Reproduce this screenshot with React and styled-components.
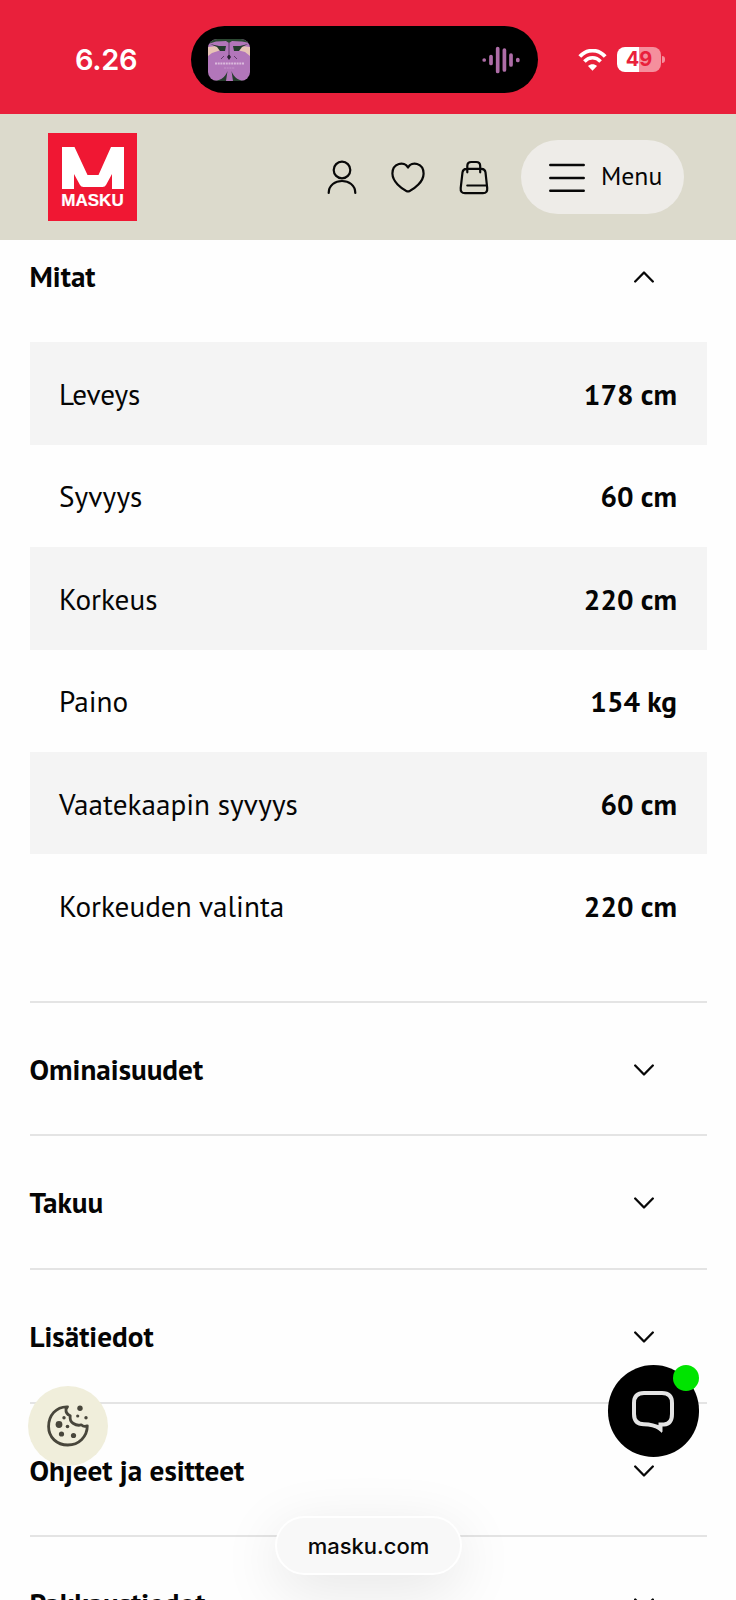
import React from 'react';
import styled, { createGlobalStyle } from 'styled-components';

const Global = createGlobalStyle`
  *, *::before, *::after { box-sizing: border-box; }
  body { margin: 0; background: #fefefe; color: #050505; overflow: hidden; }
  svg { display: block; flex: none; }
`;

const humanist = `'PT Sans', 'Noto Sans', 'Open Sans', sans-serif`;
const system = `Inter, 'Liberation Sans', sans-serif`;

const Screen = styled.div`
  position: relative;
  width: 736px;
  height: 1600px;
  overflow: hidden;
  display: flex;
  flex-direction: column;
  background: #fefefe;
  font-family: ${humanist};
`;

const StatusBar = styled.div`
  flex: none;
  height: 113.6px;
  background: #e9203b;
  display: flex;
  align-items: flex-start;
  padding: 26px 70px 0 75px;
`;

const Clock = styled.div`
  width: 116px;
  height: 67px;
  font: 600 29px/67px ${system};
  letter-spacing: -0.3px;
  color: #fff;
`;

const Island = styled.div`
  width: 347px;
  height: 67px;
  border-radius: 34px;
  background: #000;
  display: flex;
  align-items: center;
  justify-content: space-between;
  padding: 0 18px 0 16.5px;
`;

const Signals = styled.div`
  height: 67px;
  margin-left: 40px;
  display: flex;
  align-items: center;
  gap: 10px;
`;

const Battery = styled.div`
  display: flex;
  align-items: center;
  gap: 1px;
`;

const BatteryBody = styled.div`
  width: 44px;
  height: 24.5px;
  border-radius: 8px;
  background: linear-gradient(90deg, #fff 49%, #f58f9d 49%);
  color: #e9203b;
  font: 700 20px/25px ${system};
  text-align: center;
`;

const BatteryTip = styled.div`
  width: 3px;
  height: 7px;
  border-radius: 0 4px 4px 0;
  background: #f58f9d;
`;

const Header = styled.header`
  flex: none;
  height: 126.4px;
  background: #dcdacc;
  display: flex;
  align-items: center;
  padding: 0 52px 0 48px;
`;

const Logo = styled.div`
  width: 89px;
  height: 87.5px;
  background: #f01733;
  display: flex;
  flex-direction: column;
  align-items: center;
  padding-top: 14px;
`;

const LogoName = styled.div`
  margin-top: 3px;
  font: 700 17px/18px 'Liberation Sans', Arial, sans-serif;
  -webkit-text-stroke: 0.2px #fff;
  color: #fff;
  letter-spacing: 0;
  white-space: nowrap;
`;

const Actions = styled.nav`
  margin-left: auto;
  display: flex;
  align-items: center;
`;

const ActionIcons = styled.div`
  display: flex;
  gap: 32px;
  margin: 2px 30px 0 0;
`;

const MenuButton = styled.div`
  width: 163px;
  height: 73.5px;
  border-radius: 37px;
  background: #eeece8;
  display: flex;
  align-items: center;
  padding: 0 0 2px 27px;
  gap: 15px;

  svg {
    margin-top: 5px;
  }
`;

const Label = styled.span`
  white-space: nowrap;
  font-size: ${p => p.$size || 29.2}px;
  font-weight: ${p => (p.$bold ? 700 : 400)};
  line-height: 40px;
`;

const Content = styled.main`
  flex: none;
  padding: 0 29.5px;
`;

const OpenPanel = styled.section`
  border-bottom: 2px solid #e4e4e4;
  padding-bottom: 44px;
`;

const PanelHeading = styled.div`
  height: ${p => (p.$open ? 102.4 : 131.7)}px;
  padding: ${p => (p.$open ? '16px 52.5px 0 0' : '46px 52.5px 0 0')};
  display: flex;
  align-items: flex-start;
  justify-content: space-between;
`;

const ClosedPanel = styled.section`
  border-bottom: 2px solid #e4e4e4;
`;

const ChevronSlot = styled.div`
  padding-top: 15px;
`;

const SpecRow = styled.div`
  height: 102.4px;
  padding: 1px 29.5px 0 29.5px;
  display: flex;
  align-items: center;
  justify-content: space-between;
  background: ${p => (p.$shaded ? '#f4f4f4' : 'transparent')};
`;

const CookieButton = styled.div`
  position: absolute;
  left: 28px;
  top: 1385.5px;
  width: 80px;
  height: 80px;
  border-radius: 50%;
  background: #f0eedb;
  display: grid;
  place-items: center;
`;

const ChatButton = styled.div`
  position: absolute;
  left: 607.7px;
  top: 1365.3px;
  width: 91.5px;
  height: 91.5px;
  border-radius: 50%;
  background: #000;
  display: grid;
  place-items: center;

  svg {
    margin-top: 2px;
  }
`;

const OnlineDot = styled.span`
  position: absolute;
  right: 0;
  top: 0;
  width: 26px;
  height: 26px;
  border-radius: 50%;
  background: #00e400;
`;

const AddressPill = styled.div`
  position: absolute;
  left: 275px;
  top: 1515.5px;
  width: 187px;
  height: 59px;
  border: 2px solid #fff;
  border-radius: 30px;
  background: #f8f8f8;
  box-shadow: 0 14px 60px rgba(0, 0, 0, 0.1);
  font: 500 22px/56px ${system};
  text-align: center;
  color: #080808;
`;

const Chevron = ({ up }) => (
  <ChevronSlot>
    <svg width="20" height="12" viewBox="0 0 20 12" fill="none" stroke="#080808" strokeWidth="2.3" strokeLinecap="round" strokeLinejoin="round">
      <path d={up ? 'M1.2 10.5 10 1.5 18.800 10.5' : 'M1.2 1.5 10 10.5 18.800 1.5'} />
    </svg>
  </ChevronSlot>
);

const AlbumArt = () => (
  <svg width="42" height="42" viewBox="0 0 42 42">
    <defs><clipPath id="art"><rect width="42" height="42" rx="9" /></clipPath></defs>
    <g clipPath="url(#art)">
      <rect width="42" height="42" fill="#b276ba" />
      <path d="M0 0H42V4L34 2.500 24 2 21 4 18 2 8 2.500 0 5Z" fill="#2c4932" />
      <path d="M0 8 9 7 13 11 4 14 0 17ZM42 8 34 7 29 11 37 13 42 17Z" fill="#e7c3b5" />
      <path d="M2 5 11 7 18 7 17 12H12L9 8ZM40 5 32 7 25 7 26 12H31L34 8Z" fill="#233b2b" />
      <path d="M21 4V15M13 20 16 17M29 20 26 17" stroke="#633a6b" />
      <path d="M21 15 23 18 21 21 19 18Z" fill="#292131" />
      <path d="M3 42C12 42 17 39 19.500 32L18 42ZM39 42C31 42 26 39 23.500 32L25 42Z" fill="#263e2d" />
      <path d="M0 36 5 42H0ZM42 36 37 42H42Z" fill="#263e2d" />
      <path d="M7 24.500H36" stroke="#dab9dc" strokeWidth="2" strokeDasharray="2 .7" />
      <path d="M16 29H27" stroke="#c594ca" strokeDasharray="2 .7" />
    </g>
  </svg>
);

const SoundWave = () => (
  <svg width="38" height="28" viewBox="0 0 38 28" stroke="#ae6da7" strokeWidth="3.7" strokeLinecap="round">
    <path d="M2.2 14h.01M9 10.500v7M15.700 2.500v23M22.400 4v20M29 9v10M35.800 13.500v1" />
  </svg>
);

const Wifi = () => (
  <svg width="29" height="22" viewBox="0 0 29 22">
    <path d="M1.8 7.600C9-.4 20-.4 27.200 7.600" fill="none" stroke="#fff" strokeWidth="3.8" />
    <path d="M6.400 12.400c4.700-4.900 11.500-4.900 16.200 0" fill="none" stroke="#fff" strokeWidth="3.6" />
    <path d="M14.500 21.700 10 17.100c2.500-2.400 6.500-2.400 9 0Z" fill="#fff" />
  </svg>
);

const iconProps = { fill: 'none', stroke: '#080808', strokeWidth: 2.2, strokeLinecap: 'round', strokeLinejoin: 'round' };

const Person = () => (
  <svg width="34" height="36" viewBox="0 0 34 36" {...iconProps}>
    <circle cx="17" cy="10" r="8.3" />
    <path d="M3.700 33C3.700 17 30.300 17 30.300 33" />
  </svg>
);

const Heart = () => (
  <svg width="34" height="36" viewBox="0 0 34 36" {...iconProps}>
    <path d="M17 7.600C13.500.5 1.300 3.200 1.400 13.600 1.600 22 10.500 28.700 15.300 30.900Q17 31.700 18.700 30.900C23.500 28.700 32.400 22 32.600 13.600 32.700 3.200 20.500.5 17 7.600Z" />
  </svg>
);

const Bag = () => (
  <svg width="34" height="36" viewBox="0 0 34 36" {...iconProps}>
    <path d="M9.400 8.800H24.600Q28 8.800 28.500 12.400L30.200 28Q30.700 33.200 26 33.200H8Q3.200 33.200 3.700 28L5.500 12.400Q6 8.800 9.400 8.800ZM10.300 12.300V6Q10.300 2 14.300 2H19.200Q23.200 2 23.200 6V12.300M10.300 25.500H29.600" />
  </svg>
);

const Bars = () => (
  <svg width="38" height="30" viewBox="0 0 38 30" {...iconProps} strokeWidth="2.5">
    <path d="M2.300 2H35.700M2.300 15H35.700M2.300 27.800H35.700" />
  </svg>
);

const Mark = () => (
  <svg width="62" height="42" viewBox="0 0 62 42">
    <path d="M0 0H12.500L25.500 28H36.500L49 0H62V42H50V27L44 38Q43 40 40.500 40H21.500Q19 40 18 38L12 27V42H0Z" fill="#fff" />
  </svg>
);

const Cookie = () => (
  <svg width="42" height="42" viewBox="0 0 42 42" fill="none" stroke="#48463b">
    <path d="M20.500 1.800C9 1.400 1.600 10.500 1.600 21.500 1.600 32.500 9.900 40 20.800 40 32 40 40.300 31.500 40.300 20.800Q37 22.300 34.200 19.800 30.500 21.200 26 18.300 22.500 16 23.200 10.800 18.500 8.500 19 4.300Z" strokeWidth="2.800" strokeLinejoin="round" />
    <g fill="#48463b" stroke="none">
      <circle cx="12" cy="19.500" r="3.400" />
      <circle cx="14.500" cy="29" r="2.600" />
      <circle cx="26.500" cy="30.500" r="2.600" />
      <circle cx="20.500" cy="21.500" r="1.800" />
      <circle cx="17" cy="12.700" r="1.700" />
      <circle cx="33" cy="3.200" r="2.700" />
      <circle cx="30.700" cy="11" r="1.600" />
      <circle cx="39" cy="12.700" r="1.700" />
    </g>
  </svg>
);

const Chat = () => (
  <svg width="44" height="44" viewBox="0 0 44 44" fill="none" stroke="#e4e4e4" strokeWidth="4">
    <path d="M13 3H31Q41 3 41 13V24Q41 34 33 34.500H29.500V38.500Q22 34.200 13 34.200Q3 34.200 3 24V13Q3 3 13 3Z" />
    <path d="M22 35.500 31 43V36Z" fill="#e4e4e4" stroke="none" />
  </svg>
);

const specs = [
  ['Leveys', '178 cm'],
  ['Syvyys', '60 cm'],
  ['Korkeus', '220 cm'],
  ['Paino', '154 kg'],
  ['Vaatekaapin syvyys', '60 cm'],
  ['Korkeuden valinta', '220 cm'],
];

const panels = ['Ominaisuudet', 'Takuu', 'Lisätiedot', 'Ohjeet ja esitteet', 'Pakkaustiedot'];

export default function App() {
  return (
    <>
      <Global />
      <Screen>
        <StatusBar>
          <Clock>6.26</Clock>
          <Island>
            <AlbumArt />
            <SoundWave />
          </Island>
          <Signals>
            <Wifi />
            <Battery>
              <BatteryBody>49</BatteryBody>
              <BatteryTip />
            </Battery>
          </Signals>
        </StatusBar>
        <Header>
          <Logo>
            <Mark />
            <LogoName>MASKU</LogoName>
          </Logo>
          <Actions>
            <ActionIcons>
              <Person />
              <Heart />
              <Bag />
            </ActionIcons>
            <MenuButton>
              <Bars />
              <Label $size={25.7}>Menu</Label>
            </MenuButton>
          </Actions>
        </Header>
        <Content>
          <OpenPanel>
            <PanelHeading $open>
              <Label $bold>Mitat</Label>
              <Chevron up />
            </PanelHeading>
            {specs.map(([name, value], i) => (
              <SpecRow key={name} $shaded={i % 2 === 0}>
                <Label>{name}</Label>
                <Label $bold>{value}</Label>
              </SpecRow>
            ))}
          </OpenPanel>
          {panels.map(title => (
            <ClosedPanel key={title}>
              <PanelHeading>
                <Label $bold>{title}</Label>
                <Chevron />
              </PanelHeading>
            </ClosedPanel>
          ))}
        </Content>
        <CookieButton><Cookie /></CookieButton>
        <ChatButton>
          <Chat />
          <OnlineDot />
        </ChatButton>
        <AddressPill>masku.com</AddressPill>
      </Screen>
    </>
  );
}
